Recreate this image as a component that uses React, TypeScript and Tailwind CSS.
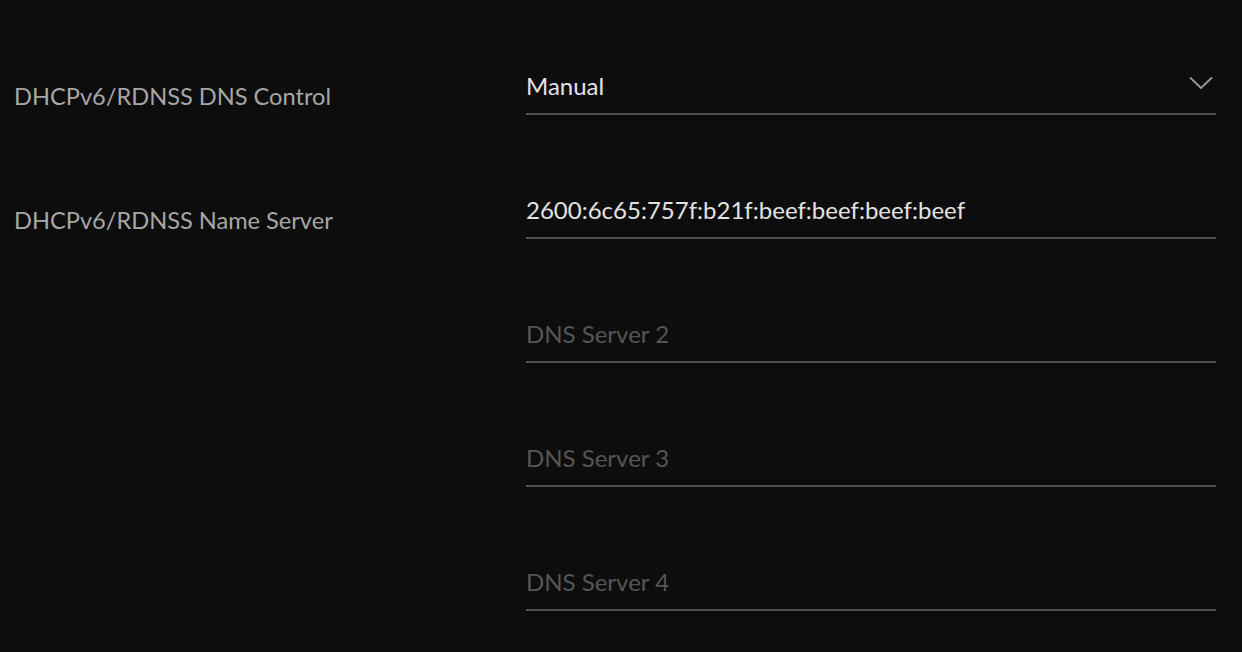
import React from "react";

const font = { fontFamily: "Lato, 'Noto Sans', sans-serif" };

function Field({ children, chevron }: { children: React.ReactNode; chevron?: boolean }) {
  return (
    <div className="flex-1 border-b-2 border-[#4f4f4f] pb-[12px] flex items-center justify-between">
      <div className="text-[24px] leading-[30px]">{children}</div>
      {chevron && (
        <svg width="24" height="14" viewBox="0 0 24 14" className="mr-[3px] mt-[-6px]">
          <path d="M1 1.5 L12 12 L23 1.5" fill="none" stroke="#9a9a9a" strokeWidth="1.8" />
        </svg>
      )}
    </div>
  );
}

function Row({ label, children }: { label?: string; children: React.ReactNode }) {
  return (
    <div className="flex items-start">
      <div className="w-[512px] shrink-0 mt-[10px] text-[23.6px] leading-[30px] text-[#a6a6a6]">{label}</div>
      {children}
    </div>
  );
}

export default function App() {
  return (
    <div className="w-[1242px] h-[652px] bg-[#0d0d0d] overflow-hidden pl-[14px] pr-[26px] pt-[71px] flex flex-col gap-[80px]" style={font}>
      <Row label="DHCPv6/RDNSS DNS Control">
        <Field chevron>
          <span className="text-[#e2e2e2]">Manual</span>
        </Field>
      </Row>
      <Row label="DHCPv6/RDNSS Name Server">
        <Field>
          <span className="text-[#e2e2e2]">2600:6c65:757f:b21f:beef:beef:beef:beef</span>
        </Field>
      </Row>
      <Row>
        <Field>
          <span className="text-[#555555]">DNS Server 2</span>
        </Field>
      </Row>
      <Row>
        <Field>
          <span className="text-[#555555]">DNS Server 3</span>
        </Field>
      </Row>
      <Row>
        <Field>
          <span className="text-[#555555]">DNS Server 4</span>
        </Field>
      </Row>
    </div>
  );
}
